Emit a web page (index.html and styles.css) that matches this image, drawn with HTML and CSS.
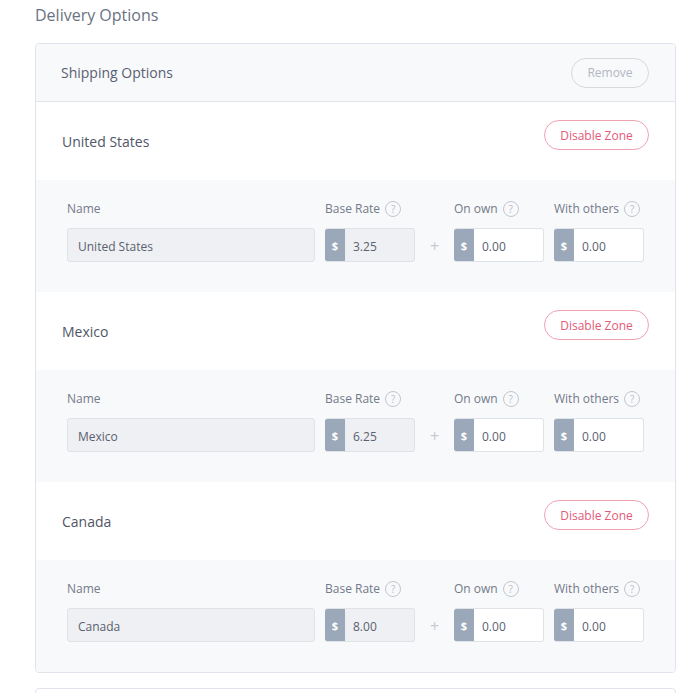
FILE: index.html
```html
<!DOCTYPE html>
<html>
<head>
<meta charset="utf-8">
<link rel="stylesheet" href="styles.css">
</head>
<body>
<div class="page">
  <h2 class="page-title">Delivery Options</h2>
  <div class="card">
    <div class="card-header">
      <span class="card-title">Shipping Options</span>
      <button class="btn btn-muted">Remove</button>
    </div>

    <div class="zone">
      <div class="zone-head">
        <span class="zone-name">United States</span>
        <button class="btn btn-danger">Disable Zone</button>
      </div>
      <div class="zone-fields">
        <div class="field field-name">
          <label class="label">Name</label>
          <div class="input input-disabled"><span class="val">United States</span></div>
        </div>
        <div class="field field-money">
          <label class="label">Base Rate <span class="help">?</span></label>
          <div class="input input-disabled"><span class="addon">$</span><span class="val">3.25</span></div>
        </div>
        <div class="plus">+</div>
        <div class="field field-money">
          <label class="label">On own <span class="help">?</span></label>
          <div class="input"><span class="addon">$</span><span class="val">0.00</span></div>
        </div>
        <div class="field field-money gap">
          <label class="label">With others <span class="help">?</span></label>
          <div class="input"><span class="addon">$</span><span class="val">0.00</span></div>
        </div>
      </div>
    </div>

    <div class="zone">
      <div class="zone-head">
        <span class="zone-name">Mexico</span>
        <button class="btn btn-danger">Disable Zone</button>
      </div>
      <div class="zone-fields">
        <div class="field field-name">
          <label class="label">Name</label>
          <div class="input input-disabled"><span class="val">Mexico</span></div>
        </div>
        <div class="field field-money">
          <label class="label">Base Rate <span class="help">?</span></label>
          <div class="input input-disabled"><span class="addon">$</span><span class="val">6.25</span></div>
        </div>
        <div class="plus">+</div>
        <div class="field field-money">
          <label class="label">On own <span class="help">?</span></label>
          <div class="input"><span class="addon">$</span><span class="val">0.00</span></div>
        </div>
        <div class="field field-money gap">
          <label class="label">With others <span class="help">?</span></label>
          <div class="input"><span class="addon">$</span><span class="val">0.00</span></div>
        </div>
      </div>
    </div>

    <div class="zone">
      <div class="zone-head">
        <span class="zone-name">Canada</span>
        <button class="btn btn-danger">Disable Zone</button>
      </div>
      <div class="zone-fields">
        <div class="field field-name">
          <label class="label">Name</label>
          <div class="input input-disabled"><span class="val">Canada</span></div>
        </div>
        <div class="field field-money">
          <label class="label">Base Rate <span class="help">?</span></label>
          <div class="input input-disabled"><span class="addon">$</span><span class="val">8.00</span></div>
        </div>
        <div class="plus">+</div>
        <div class="field field-money">
          <label class="label">On own <span class="help">?</span></label>
          <div class="input"><span class="addon">$</span><span class="val">0.00</span></div>
        </div>
        <div class="field field-money gap">
          <label class="label">With others <span class="help">?</span></label>
          <div class="input"><span class="addon">$</span><span class="val">0.00</span></div>
        </div>
      </div>
    </div>
  </div>
  <div class="card card-next"></div>
</div>
</body>
</html>
```

FILE: styles.css
```css
* { box-sizing: border-box; }
html, body { margin: 0; padding: 0; background: #fff; }
body {
  font-family: "Open Sans", "Noto Sans", sans-serif;
  color: #505666;
  overflow: hidden;
}
.page {
  padding: 4px 22px 0 35px;
}
.page-title {
  margin: 0 0 17px 0;
  font-size: 16px;
  line-height: 22px;
  font-weight: 400;
  color: #6a7282;
}
.card {
  border: 1px solid #e1e3ea;
  border-radius: 4px;
  background: #fff;
  overflow: hidden;
}
.card-next {
  margin-top: 15px;
  height: 40px;
}
.card-header {
  height: 58px;
  background: #f8f9fb;
  border-bottom: 1px solid #e3e5ea;
  display: flex;
  align-items: center;
  justify-content: space-between;
  padding: 0 26px 0 25px;
}
.card-title {
  font-size: 14px;
  color: #596072;
}
.btn {
  font-family: "Open Sans", "Noto Sans", sans-serif;
  font-size: 12px;
  height: 30px;
  border-radius: 15px;
  background: #fff;
  padding: 0 15px;
  cursor: pointer;
}
.btn-muted {
  background: transparent;
  border: 1px solid #d6d8de;
  color: #b3b7c0;
  width: 78px;
  padding: 0;
}
.btn-danger {
  border: 1px solid #f0a2b3;
  color: #e25a78;
  width: 105px;
  padding: 0;
}
.zone-head {
  height: 78px;
  display: flex;
  justify-content: space-between;
  align-items: flex-start;
  padding: 18px 26px 0 26px;
}
.zone-name {
  font-size: 14px;
  line-height: 20px;
  margin-top: 12px;
  color: #505666;
}
.zone-fields {
  height: 112px;
  background: #f8f9fb;
  display: flex;
  align-items: flex-start;
  padding: 20px 31px 0 31px;
}
.field {
  display: flex;
  flex-direction: column;
}
.field-name {
  flex: 1;
  margin-right: 10px;
}
.field-money {
  width: 90px;
  flex: none;
}
.field-money.gap {
  margin-left: 10px;
}
.label {
  font-size: 12px;
  line-height: 18px;
  height: 18px;
  color: #737a89;
  display: flex;
  align-items: center;
  margin-bottom: 10px;
  white-space: nowrap;
}
.help {
  width: 16px;
  height: 16px;
  border: 1px solid #c2c6cd;
  border-radius: 50%;
  color: #b9bec6;
  font-size: 10px;
  line-height: 14px;
  text-align: center;
  margin-left: 5px;
  flex: none;
}
.input {
  height: 34px;
  border: 1px solid #dfe2e7;
  border-radius: 3px;
  background: #fff;
  display: flex;
  align-items: stretch;
  font-size: 12px;
  color: #5a6070;
  padding-left: 2px;
  overflow: hidden;
}
.input-disabled {
  background: #eff0f3;
}
.field-money .input {
  padding-left: 0;
  border-left: none;
}
.addon {
  width: 20px;
  flex: none;
  background: #9ba8b9;
  color: #fff;
  font-weight: 700;
  font-size: 11px;
  display: flex;
  align-items: center;
  justify-content: center;
}
.val {
  display: flex;
  align-items: center;
  padding: 2px 0 0 8px;
}
.plus {
  width: 39px;
  flex: none;
  text-align: center;
  color: #c6cad1;
  font-size: 16px;
  line-height: 34px;
  margin-top: 29px;
}
```
